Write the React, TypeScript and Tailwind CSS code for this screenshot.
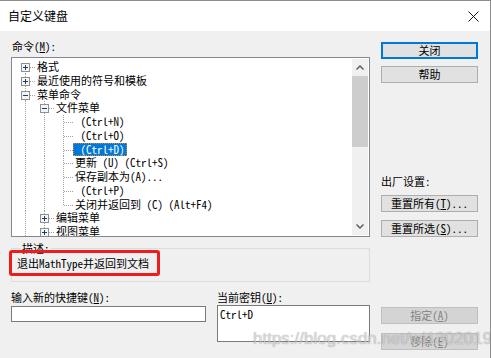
import React from 'react';

const uiFont = '"Noto Sans Mono CJK SC", "Noto Sans CJK SC", monospace';

type Kind = 'plus' | 'minus' | 'leaf';

type Node = {
    level: number;
    kind: Kind;
    text: string;
    // vertical guide lines of the ancestor columns
    guides: boolean[];
    // the node's own connector: full height, top half or bottom half
    own: 'full' | 'top' | 'bottom';
    selected?: boolean;
};

const nodes: Node[] = [
    { level: 0, kind: 'plus', text: '格式', guides: [], own: 'bottom' },
    { level: 0, kind: 'plus', text: '最近使用的符号和模板', guides: [], own: 'full' },
    { level: 0, kind: 'minus', text: '菜单命令', guides: [], own: 'full' },
    { level: 1, kind: 'minus', text: '文件菜单', guides: [true], own: 'full' },
    { level: 2, kind: 'leaf', text: ' (Ctrl+N)', guides: [true, true], own: 'full' },
    { level: 2, kind: 'leaf', text: ' (Ctrl+O)', guides: [true, true], own: 'full' },
    { level: 2, kind: 'leaf', text: ' (Ctrl+D)', guides: [true, true], own: 'full', selected: true },
    { level: 2, kind: 'leaf', text: '更新 (U) (Ctrl+S)', guides: [true, true], own: 'full' },
    { level: 2, kind: 'leaf', text: '保存副本为(A)...', guides: [true, true], own: 'full' },
    { level: 2, kind: 'leaf', text: ' (Ctrl+P)', guides: [true, true], own: 'full' },
    { level: 2, kind: 'leaf', text: '关闭并返回到 (C) (Alt+F4)', guides: [true, true], own: 'top' },
    { level: 1, kind: 'plus', text: '编辑菜单', guides: [true], own: 'full' },
    { level: 1, kind: 'plus', text: '视图菜单', guides: [true], own: 'full' },
];

const dot = '#a0a0a0';

function Guide() {
    return (
        <svg width="19" height="14" className="shrink-0 block h-full">
            <line x1="9.5" y1="0" x2="9.5" y2="14" stroke={dot} strokeDasharray="1 1" />
        </svg>
    );
}

function Connector({ own, kind }: { own: Node['own']; kind: Kind }) {
    const y1 = own === 'bottom' ? 7 : 0;
    const y2 = own === 'top' ? 7 : 14;
    return (
        <svg width="19" height="14" className="shrink-0 block h-full">
            <line x1="9.5" y1={y1} x2="9.5" y2={y2} stroke={dot} strokeDasharray="1 1" />
            <line x1="10" y1="7.5" x2="19" y2="7.5" stroke={dot} strokeDasharray="1 1" />
            {kind !== 'leaf' && (
                <g>
                    <rect x="5.5" y="3.5" width="8" height="8" fill="#f5f5f5" stroke="#8e8f8f" />
                    <line x1="7" y1="7.5" x2="12" y2="7.5" stroke="#1c3a6e" />
                    {kind === 'plus' && <line x1="9.5" y1="5" x2="9.5" y2="10" stroke="#1c3a6e" />}
                </g>
            )}
        </svg>
    );
}

function TreeRow({ node }: { node: Node }) {
    return (
        <div className="flex items-stretch h-[13.75px] whitespace-pre">
            {node.guides.map((g, i) =>
                g ? <Guide key={i} /> : <div key={i} className="w-[19px] shrink-0" />
            )}
            <Connector own={node.own} kind={node.kind} />
            <span
                className={
                    node.selected
                        ? 'ml-0 px-[2px] leading-[13px] bg-[#0078d7] text-white outline outline-1 outline-dotted outline-[#d08a2a] -outline-offset-1'
                        : 'ml-0 px-[2px] leading-[13px]'
                }
            >
                {node.text}
            </span>
        </div>
    );
}

function Chevron({ down }: { down?: boolean }) {
    return (
        <svg width="8" height="5" viewBox="0 0 8 5">
            <path
                d={down ? 'M0.5 0.5 L4 4 L7.5 0.5' : 'M0.5 4.5 L4 1 L7.5 4.5'}
                fill="none"
                stroke="#606060"
                strokeWidth="1.5"
            />
        </svg>
    );
}

function Button({
    children,
    primary,
    disabled,
}: {
    children: React.ReactNode;
    primary?: boolean;
    disabled?: boolean;
}) {
    let cls = 'h-[17px] w-[97px] flex items-center justify-center text-[11px] leading-none border ';
    if (primary) cls += 'bg-[#e1e1e1] border-[#0078d7] ring-1 ring-inset ring-[#0078d7]';
    else if (disabled) cls += 'bg-[#d4d4d4] border-[#bfbfbf] text-[#838383] w-[91px]';
    else cls += 'bg-[#e1e1e1] border-[#adadad]';
    return <div className={cls}>{children}</div>;
}

export default function App() {
    return (
        <div
            className="relative w-[491px] h-[358px] overflow-hidden bg-[#f0f0f0] text-black border-t border-r border-[#8c8c8c]"
            style={{ fontFamily: uiFont }}
        >
            {/* Title bar */}
            <div className="h-[30px] bg-white flex items-center justify-between pl-2 pr-[11px]">
                <span className="text-[12px] leading-none" style={{ fontFamily: '"Noto Sans CJK SC", sans-serif' }}>
                    自定义键盘
                </span>
                <svg width="11" height="11" viewBox="0 0 11 11">
                    <path d="M0.5 0.5 L10.5 10.5 M10.5 0.5 L0.5 10.5" stroke="#111" strokeWidth="1" />
                </svg>
            </div>

            {/* Body */}
            <div className="flex pl-[11px] gap-[11px]">
                {/* Left column */}
                <div className="w-[359px] flex flex-col text-[11px]">
                    <div className="mt-[9px] h-[13px] leading-[13px] pl-px">
                        命令(<u>M</u>):
                    </div>
                    <div className="mt-[4px] h-[180px] bg-white border border-[#828790] flex overflow-hidden">
                        <div className="flex-1 pt-[2px] pl-[4px] overflow-hidden">
                            {nodes.map((n, i) => (
                                <TreeRow key={i} node={n} />
                            ))}
                        </div>
                        <div className="w-[16px] my-px mr-px bg-[#f0f0f0] flex flex-col">
                            <div className="h-[17px] flex items-center justify-center">
                                <Chevron />
                            </div>
                            <div className="h-[71px] bg-[#cdcdcd]" />
                            <div className="flex-1" />
                            <div className="h-[17px] flex items-center justify-center">
                                <Chevron down />
                            </div>
                        </div>
                    </div>

                    {/* Description group */}
                    <div className="relative mt-[11px] h-[34px] border border-[#dcdcdc] pt-[8px] pl-[5px]">
                        <span className="absolute -top-[7px] left-[9px] px-px bg-[#f0f0f0] leading-[13px]">描述:</span>
                        <div className="leading-[13px]">退出MathType并返回到文档</div>
                    </div>

                    {/* Shortcut inputs */}
                    <div className="mt-[9px] flex gap-[11px]">
                        <div className="w-[195px] flex flex-col">
                            <div className="h-[13px] leading-[13px]">
                                输入新的快捷键(<u>N</u>):
                            </div>
                            <div className="mt-[2px] h-[16px] bg-white border border-[#7a7a7a]" />
                        </div>
                        <div className="flex-1 flex flex-col">
                            <div className="h-[13px] leading-[13px]">
                                当前密钥(<u>U</u>):
                            </div>
                            <div className="mt-[1px] h-[37px] bg-white border border-[#7a7a7a] px-[2px] pt-[2px] leading-[13px]">
                                Ctrl+D
                            </div>
                        </div>
                    </div>
                </div>

                {/* Right column */}
                <div className="w-[97px] flex flex-col">
                    <div className="mt-[11px]">
                        <Button primary>关闭</Button>
                    </div>
                    <div className="mt-[7px]">
                        <Button>帮助</Button>
                    </div>
                    <div className="mt-[92px] h-[13px] leading-[13px] text-[11px]">出厂设置:</div>
                    <div className="mt-[7px]">
                        <Button>
                            重置所有(<u>T</u>)...
                        </Button>
                    </div>
                    <div className="mt-[8px]">
                        <Button>
                            重置所选(<u>S</u>)...
                        </Button>
                    </div>
                    <div className="mt-[70px]">
                        <Button disabled>
                            指定(<u>A</u>)
                        </Button>
                    </div>
                    <div className="mt-[9px]">
                        <Button disabled>
                            移除(<u>E</u>)
                        </Button>
                    </div>
                </div>
            </div>

            {/* Annotation highlight */}
            <div className="absolute left-[9px] top-[249px] w-[151px] h-[26px] border-[3px] border-[#ee1c1c] rounded-[3px]" />

            {/* Watermark */}
            <div
                className="absolute left-[253px] top-[328px] text-[17px] leading-[20px] text-white/60 [text-shadow:0_0_1px_rgba(0,0,0,0.45)] whitespace-nowrap"
                style={{ fontFamily: '"Liberation Sans", Arial, sans-serif' }}
            >
                https://blog.csdn.net/wl1302019
            </div>
        </div>
    );
}
